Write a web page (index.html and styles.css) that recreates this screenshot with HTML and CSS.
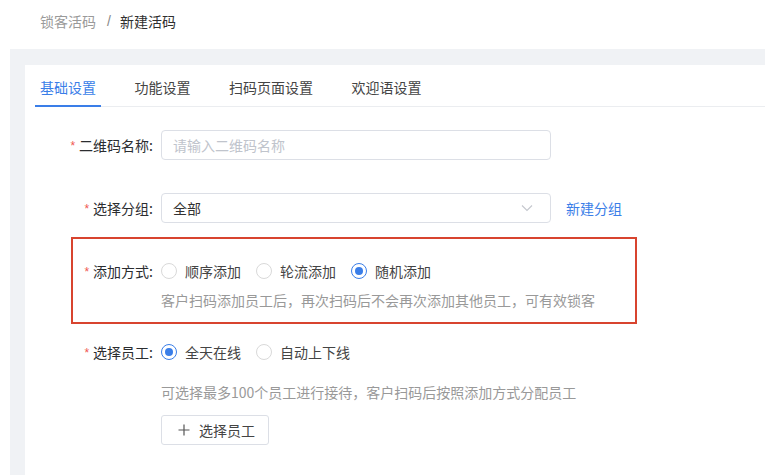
FILE: index.html
```html
<!DOCTYPE html>
<html lang="zh-CN">
<head>
<meta charset="utf-8">
<title>新建活码</title>
<link rel="stylesheet" href="styles.css">
</head>
<body>
<header class="crumbs">
  <span class="crumb-link">锁客活码</span>
  <span class="crumb-sep">/</span>
  <span class="crumb-current">新建活码</span>
</header>
<main class="page">
  <section class="card">
    <nav class="tabs">
      <span class="tab active">基础设置</span>
      <span class="tab">功能设置</span>
      <span class="tab">扫码页面设置</span>
      <span class="tab">欢迎语设置</span>
    </nav>
    <form class="form">
      <div class="item item-name">
        <label class="label"><i class="req">*</i>二维码名称:</label>
        <div class="control">
          <div class="input"><span class="placeholder">请输入二维码名称</span></div>
        </div>
      </div>
      <div class="item item-group">
        <label class="label"><i class="req">*</i>选择分组:</label>
        <div class="control control-row">
          <div class="input select">
            <span class="value">全部</span>
            <svg class="chev" width="12" height="8" viewBox="0 0 12 8"><path d="M1 1.5 L6 6.5 L11 1.5" fill="none" stroke="#c4c7cd" stroke-width="1.1"/></svg>
          </div>
          <a class="link">新建分组</a>
        </div>
      </div>
      <div class="item item-mode">
        <div class="annot"></div>
        <label class="label"><i class="req">*</i>添加方式:</label>
        <div class="control">
          <div class="radios">
            <span class="radio"><i class="dot"></i>顺序添加</span>
            <span class="radio"><i class="dot"></i>轮流添加</span>
            <span class="radio checked"><i class="dot"></i>随机添加</span>
          </div>
          <p class="hint hint-mode">客户扫码添加员工后，再次扫码后不会再次添加其他员工，可有效锁客</p>
        </div>
      </div>
      <div class="item item-staff">
        <label class="label"><i class="req">*</i>选择员工:</label>
        <div class="control">
          <div class="radios">
            <span class="radio checked"><i class="dot"></i>全天在线</span>
            <span class="radio"><i class="dot"></i>自动上下线</span>
          </div>
          <p class="hint hint-staff">可选择最多100个员工进行接待，客户扫码后按照添加方式分配员工</p>
          <button type="button" class="btn">
            <svg width="12" height="12" viewBox="0 0 12 12"><path d="M6 0.5 V11.5 M0.5 6 H11.5" stroke="#555" stroke-width="1.2"/></svg>
            <span>选择员工</span>
          </button>
        </div>
      </div>
    </form>
  </section>
</main>
</body>
</html>
```
FILE: styles.css
```css
* { box-sizing: border-box; }
html, body {
  margin: 0;
  padding: 0;
  background: #ffffff;
  font-family: "Noto Sans CJK SC", "Noto Sans", "Liberation Sans", sans-serif;
  font-size: 14px;
  color: #333;
  overflow: hidden;
}
.crumbs {
  height: 49px;
  padding: 10px 0 0 40px;
  line-height: 22px;
  display: flex;
  align-items: flex-start;
}
.crumb-link { color: #9a9a9a; }
.crumb-sep { color: #888; margin: 0 9px 0 11px; font-family: "Liberation Sans", sans-serif; }
.crumb-current { color: #2f2f2f; }

.page {
  margin-left: 10px;
  background: #f0f2f5;
  padding: 16px 0 0 15px;
  height: 426px;
}
.card {
  background: #fff;
  height: 100%;
  padding-left: 10px;
}
.tabs {
  display: flex;
  height: 42px;
  border-bottom: 1px solid #ebedf0;
}
.tab {
  padding: 11px 5px 0;
  margin-right: 28.5px;
  line-height: 22px;
  color: #444;
  position: relative;
}
.tab.active { color: #3a7ee8; }
.tab.active::after {
  content: "";
  position: absolute;
  left: 0;
  right: 0;
  bottom: -1px;
  height: 2px;
  background: #3a7ee8;
}
.form {
  padding-top: 23px;
  margin-left: -10px;
}
.item {
  display: flex;
  align-items: flex-start;
  position: relative;
}
.label {
  width: 136px;
  height: 30px;
  flex: none;
  display: flex;
  justify-content: flex-end;
  align-items: center;
  padding-right: 8px;
  line-height: 22px;
  color: #2b2d30;
  white-space: nowrap;
}
.req {
  font-style: normal;
  color: #f0584f;
  font-family: "Liberation Sans", sans-serif;
  font-size: 12px;
  line-height: 12px;
  margin-right: 4px;
  position: relative;
  top: 1px;
}
.control { flex: none; }
.control-row { display: flex; align-items: center; }
.input {
  width: 390px;
  height: 30px;
  border: 1px solid #dcdfe6;
  border-radius: 4px;
  padding: 0 11px;
  line-height: 22px;
  display: flex;
  align-items: center;
}
.placeholder { color: #c0c4cc; }
.select { justify-content: space-between; }
.value { color: #333; }
.chev { margin-right: 6px; }
.link { color: #3a7ee8; margin-left: 15px; cursor: pointer; line-height: 22px; }

.item-name { margin-bottom: 33px; }
.item-group { margin-bottom: 33px; }
.item-mode { margin-bottom: 27px; }

.radios {
  display: flex;
  align-items: center;
  height: 30px;
}
.radio {
  display: inline-flex;
  align-items: center;
  margin-right: 15px;
  color: #444;
  line-height: 22px;
}
.dot {
  width: 16px;
  height: 16px;
  border-radius: 50%;
  border: 1px solid #d9d9d9;
  margin-right: 8px;
  position: relative;
  background: #fff;
}
.radio.checked .dot { border-color: #3a7ee8; }
.radio.checked .dot::after {
  content: "";
  position: absolute;
  left: 3px;
  top: 3px;
  width: 8px;
  height: 8px;
  border-radius: 50%;
  background: #3a7ee8;
}
.hint {
  margin: 0;
  color: #999;
  line-height: 20px;
}
.hint-mode { margin-top: 4px; }
.hint-staff { margin-top: 15px; }
.btn {
  margin-top: 13px;
  width: 108px;
  height: 30px;
  border: 1px solid #dcdfe6;
  border-radius: 3px;
  background: #fff;
  font: inherit;
  line-height: 22px;
  color: #444;
  display: flex;
  align-items: center;
  padding: 0 0 0 16px;
  gap: 9px;
}
.annot {
  position: absolute;
  left: 46px;
  top: -19px;
  width: 566px;
  height: 87px;
  border: 2px solid #d8442f;
  pointer-events: none;
}
```
